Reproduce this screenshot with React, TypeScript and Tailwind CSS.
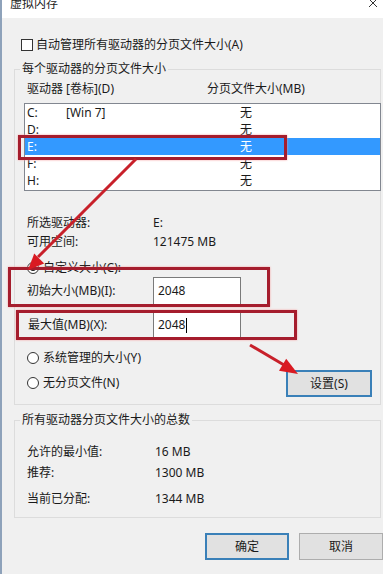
import React from 'react';

const drives = [
  { letter: 'C:', label: '[Win 7]', size: '无' },
  { letter: 'D:', label: '', size: '无' },
  { letter: 'E:', label: '', size: '无' },
  { letter: 'F:', label: '', size: '无' },
  { letter: 'H:', label: '', size: '无' },
];

function Radio({ checked, label }: { checked?: boolean; label: string }) {
  return (
    <div className="flex h-[16px] items-center">
      <span className="flex h-[12px] w-[12px] items-center justify-center rounded-full border border-[#333333] bg-white">
        {checked && <span className="h-[6px] w-[6px] rounded-full bg-[#1a1a1a]" />}
      </span>
      <span className="ml-[4px]">{label}</span>
    </div>
  );
}

function InfoRow({ label, value, valueX, className }: { label: string; value: string; valueX: string; className?: string }) {
  return (
    <div className={`flex h-[16px] items-center pl-[3px] ${className ?? ''}`}>
      <span className={valueX}>{label}</span>
      <span>{value}</span>
    </div>
  );
}

export default function App() {
  return (
    <div className="relative h-[574px] w-[383px] overflow-hidden border-l-2 border-[#8ea2ba] bg-[#f0f0f0] font-['Noto_Sans','Noto_Sans_CJK_SC',sans-serif] text-[12px] leading-[16px] text-[#1a1a1a]">
      {/* title bar */}
      <div className="flex h-[18px] items-start justify-between bg-white">
        <span className="-mt-[4px] ml-[8px] text-[12px]">虚拟内存</span>
        <svg width="14" height="10" viewBox="0 0 14 10" className="mr-[1px]">
          <path d="M1 -1 L9 7 M9 -1 L1 7" stroke="#333" strokeWidth="1" fill="none" />
        </svg>
      </div>

      {/* auto manage */}
      <div className="ml-[19px] mt-[19px] flex h-[16px] items-center">
        <span className="h-[12px] w-[12px] border border-[#333333] bg-white" />
        <span className="ml-[3px]">自动管理所有驱动器的分页文件大小(A)</span>
      </div>

      {/* per drive */}
      <fieldset className="ml-[12px] mt-[8px] w-[367px] min-w-0 border border-[#dcdcdc] px-[9px] pb-[7px]">
        <legend className="-ml-[4px] px-[2px]">每个驱动器的分页文件大小</legend>
        <div className="mt-[4px] flex h-[16px] items-center pl-[3px]">
          <span className="w-[180px]">驱动器 [卷标](D)</span>
          <span>分页文件大小(MB)</span>
        </div>
        <div className="mt-[6px] h-[88px] w-[357px] border border-[#828790] bg-white">
          {drives.map((d) => (
            <div
              key={d.letter}
              className={`flex h-[17px] items-center pl-[2px] ${d.letter === 'E:' ? 'bg-[#3399ff] text-white' : ''}`}
            >
              <span className="w-[39px]">{d.letter}</span>
              <span className="w-[174px]">{d.label}</span>
              <span>{d.size}</span>
            </div>
          ))}
        </div>

        <InfoRow className="mt-[24px]" label="所选驱动器:" value="E:" valueX="w-[126px]" />
        <InfoRow className="mt-[3px]" label="可用空间:" value="121475 MB" valueX="w-[126px]" />

        <div className="mt-[10px] pl-[3px]">
          <Radio checked label="自定义大小(C):" />
        </div>

        <div className="mt-[1px] flex h-[28px] items-center pl-[3px]">
          <span className="w-[126px]">初始大小(MB)(I):</span>
          <div className="flex h-[28px] w-[88px] items-center border border-[#7a7a7a] bg-white pl-[4px]">2048</div>
        </div>
        <div className="mt-[6px] flex h-[28px] items-center pl-[4px]">
          <span className="w-[125px]">最大值(MB)(X):</span>
          <div className="flex h-[28px] w-[88px] items-center border border-[#7a7a7a] bg-white pl-[4px]">
            2048
            <span className="ml-[1px] h-[15px] w-[1px] bg-black" />
          </div>
        </div>

        <div className="mt-[11px] flex items-start justify-between">
          <div className="flex flex-col gap-[9px] pl-[3px]">
            <Radio label="系统管理的大小(Y)" />
            <Radio label="无分页文件(N)" />
          </div>
          <button className="mr-[-1px] mt-[20px] flex h-[27px] w-[86px] items-center justify-center border-2 border-[#3a80b8] bg-[#e1e1e1]">
            设置(S)
          </button>
        </div>
      </fieldset>

      {/* totals */}
      <fieldset className="ml-[12px] mt-[7px] w-[367px] min-w-0 border border-[#dcdcdc] px-[9px] pb-[10px]">
        <legend className="-ml-[4px] px-[2px]">所有驱动器分页文件大小的总数</legend>
        <InfoRow className="mt-[16px]" label="允许的最小值:" value="16 MB" valueX="w-[128px]" />
        <InfoRow className="mt-[5px]" label="推荐:" value="1300 MB" valueX="w-[128px]" />
        <InfoRow className="mt-[10px]" label="当前已分配:" value="1344 MB" valueX="w-[128px]" />
      </fieldset>

      <div className="ml-[203px] mt-[15px] flex gap-[10px]">
        <button className="flex h-[27px] w-[85px] items-center justify-center border-2 border-[#3a80b8] bg-[#e1e1e1]">确定</button>
        <button className="flex h-[27px] w-[85px] items-center justify-center border border-[#adadad] bg-[#e1e1e1]">取消</button>
      </div>

      {/* red annotations */}
      <div className="pointer-events-none absolute left-[16px] top-[135px] h-[25px] w-[269px] border-[3px] border-[#a51d2d] shadow-[0_0_2px_#f4a0a0]" />
      <div className="pointer-events-none absolute left-[6px] top-[267px] h-[40px] w-[262px] border-[3px] border-[#a51d2d] shadow-[0_0_2px_#f4a0a0]" />
      <div className="pointer-events-none absolute left-[14px] top-[310px] h-[30px] w-[281px] border-[3px] border-[#a51d2d] shadow-[0_0_2px_#f4a0a0]" />
      <svg className="pointer-events-none absolute left-0 top-0" width="383" height="574" viewBox="0 0 383 574">
        <g transform="translate(-2 0)">
          <line x1="136" y1="159" x2="38" y2="257" stroke="#c8202a" strokeWidth="3" />
          <polygon points="28,270 44.2,263.4 34.2,253.6" fill="#d91a22" />
          <line x1="250" y1="345" x2="284" y2="365" stroke="#c8202a" strokeWidth="3" />
          <polygon points="298,374 279,370.7 286.2,358.7" fill="#d91a22" />
        </g>
      </svg>
    </div>
  );
}
